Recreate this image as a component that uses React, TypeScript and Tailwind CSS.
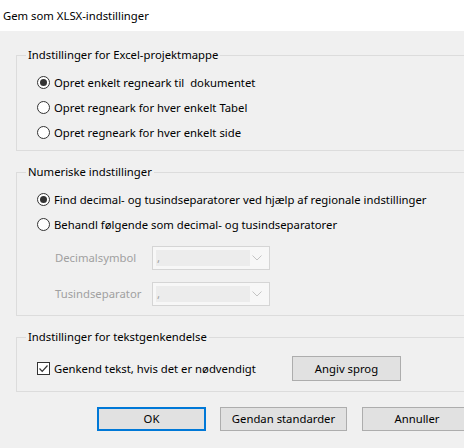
import React from "react";

function Radio({ checked, label }: { checked?: boolean; label: string }) {
  return (
    <div className="flex items-center h-[25px]">
      <span className="w-[13px] h-[13px] rounded-full border border-[#333333] bg-white flex items-center justify-center">
        {checked && <span className="w-[7px] h-[7px] rounded-full bg-[#333333]" />}
      </span>
      <span className="ml-[4px] text-black whitespace-pre">{label}</span>
    </div>
  );
}

function Combo({ value }: { value: string }) {
  return (
    <div className="w-[118px] h-[24px] border border-[#d5d5d5] bg-[#f7f7f7] flex items-center pl-[3px] pr-[4px]">
      <div className="w-[94px] h-[16px] bg-[#ececec] text-[#a0a0a0] leading-[16px] pl-[1px]">{value}</div>
      <svg className="ml-auto mr-[3px]" width="10" height="6" viewBox="0 0 10 6">
        <path d="M0.5 0.5 L5 5 L9.5 0.5" fill="none" stroke="#c4c4c4" strokeWidth="1" />
      </svg>
    </div>
  );
}

function Button({ label, focused, w }: { label: string; focused?: boolean; w: string }) {
  return (
    <button
      className={`${w} shrink-0 bg-[#e1e1e1] text-black text-[11.3px] leading-[16px] ${
        focused ? "border-2 border-[#0078d7]" : "border border-[#adadad]"
      }`}
    >
      {label}
    </button>
  );
}

export default function App() {
  return (
    <div
      className="w-[464px] h-[448px] overflow-hidden bg-[#f0f0f0] text-[11.3px] leading-[16px] text-black"
      style={{ fontFamily: '"Segoe UI", "Noto Sans", sans-serif' }}
    >
      <div className="h-[31px] bg-white flex items-center pl-[3px]">Gem som XLSX-indstillinger</div>

      <div className="pl-[16px] w-[490px]">
        <fieldset className="mt-[16px] border border-[#dcdcdc] pl-[20px] pt-[7px] pb-[5px]">
          <legend className="-ml-[11px] px-[2px] leading-[16px]">Indstillinger for Excel-projektmappe</legend>
          <Radio checked label="Opret enkelt regneark til  dokumentet" />
          <Radio label="Opret regneark for hver enkelt Tabel" />
          <Radio label="Opret regneark for hver enkelt side" />
        </fieldset>

        <fieldset className="mt-[13px] border border-[#dcdcdc] pl-[20px] pt-[7px] pb-[9px]">
          <legend className="-ml-[11px] px-[2px] leading-[16px]">Numeriske indstillinger</legend>
          <Radio checked label="Find decimal- og tusindseparatorer ved hjælp af regionale indstillinger" />
          <Radio label="Behandl følgende som decimal- og tusindseparatorer" />
          <div className="flex items-center mt-[9px] text-[#a0a0a0]">
            <span className="w-[115px] pl-[18px]">Decimalsymbol</span>
            <Combo value="," />
          </div>
          <div className="flex items-center mt-[12px] text-[#a0a0a0]">
            <span className="w-[115px] pl-[18px]">Tusindseparator</span>
            <Combo value="," />
          </div>
        </fieldset>

        <fieldset className="mt-[13px] border border-[#dcdcdc] pl-[20px] pt-[11px] pb-[10px]">
          <legend className="-ml-[11px] px-[2px] leading-[16px]">Indstillinger for tekstgenkendelse</legend>
          <div className="flex items-center h-[25px]">
            <span className="w-[13px] h-[13px] border border-[#333333] bg-white flex items-center justify-center">
              <svg width="11" height="11" viewBox="0 0 11 11">
                <path d="M1.5 5.5 L4.2 8.3 L9.5 2.5" fill="none" stroke="#333333" strokeWidth="1.2" />
              </svg>
            </span>
            <span className="ml-[4px] w-[238px]">Genkend tekst, hvis det er nødvendigt</span>
            <Button label="Angiv sprog" w="w-[109px] h-[25px]" />
          </div>
        </fieldset>
      </div>

      <div className="flex mt-[15px] pl-[97px]">
        <Button label="OK" focused w="w-[109px] h-[24px]" />
        <Button label="Gendan standarder" w="w-[127px] h-[24px] ml-[14px]" />
        <Button label="Annuller" w="w-[110px] h-[24px] ml-[15px]" />
      </div>
    </div>
  );
}
